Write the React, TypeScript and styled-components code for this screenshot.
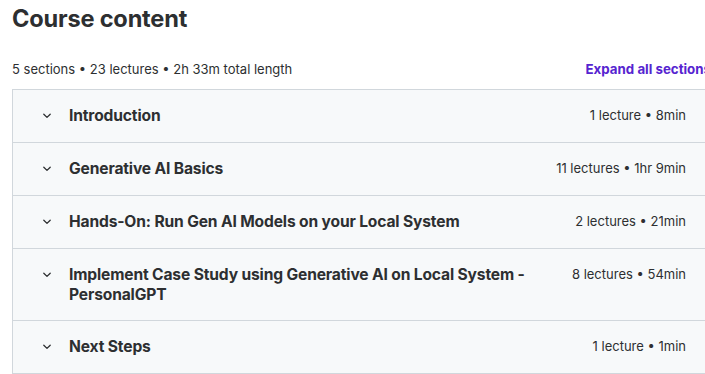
import * as React from 'react';
import styled, {createGlobalStyle} from 'styled-components';

const GlobalStyle = createGlobalStyle`
    html, body {
        margin: 0;
        padding: 0;
        background: #ffffff;
        overflow: hidden;
    }
    body {
        font-family: Inter, "Liberation Sans", Arial, sans-serif;
        color: #2d2f31;
    }
`

const Page = styled.div`
    width: 699px;
    padding: 4px 0 0 12px;
`
const Heading = styled.h2`
    font-size: 23.6px;
    line-height: 29px;
    font-weight: 700;
    margin: 0 0 26px 0;
    letter-spacing: -0.2px;
`
const SummaryBar = styled.div`
    display: flex;
    justify-content: space-between;
    align-items: center;
    height: 20px;
    margin-bottom: 10px;
    font-size: 13px;
`
const Stats = styled.span`
    color: #2d2f31;
`
const ExpandLink = styled.button`
    border: none;
    background: none;
    padding: 0;
    font: inherit;
    font-size: 13.3px;
    font-weight: 700;
    color: #5624d0;
    cursor: pointer;
    white-space: nowrap;
`
const Accordion = styled.div`
    border: 1px solid #d1d7dc;
    border-bottom: none;
`
const SectionRow = styled.div`
    display: flex;
    align-items: flex-start;
    padding: 16px 24px 16px 29px;
    background: #f7f9fa;
    border-bottom: 1px solid #d1d7dc;
    cursor: pointer;
`
const Chevron = styled.span`
    display: flex;
    align-items: center;
    height: 20px;
    width: 27px;
    flex-shrink: 0;
    color: #2d2f31;
`
const SectionTitle = styled.div`
    flex: 1;
    font-size: 15.6px;
    line-height: 19.5px;
    font-weight: 700;
    max-width: 490px;
    letter-spacing: -0.15px;
`
const SectionMeta = styled.div`
    margin-left: auto;
    font-size: 13px;
    line-height: 19.5px;
    white-space: nowrap;
    padding-left: 24px;
`

const sections = [
    {title: 'Introduction', meta: '1 lecture • 8min'},
    {title: 'Generative AI Basics', meta: '11 lectures • 1hr 9min'},
    {title: 'Hands-On: Run Gen AI Models on your Local System', meta: '2 lectures • 21min'},
    {title: 'Implement Case Study using Generative AI on Local System - PersonalGPT', meta: '8 lectures • 54min'},
    {title: 'Next Steps', meta: '1 lecture • 1min'},
];

const ChevronIcon = () => (
    <svg width="10" height="6" viewBox="0 0 10 6" fill="none">
        <path d="M1.8 1.3 L5 4.4 L8.2 1.3" stroke="currentColor" strokeWidth="1.3" strokeLinecap="round" strokeLinejoin="round"/>
    </svg>
);

export default function App(){
    return(
        <>
            <GlobalStyle/>
            <Page>
                <Heading>Course content</Heading>
                <SummaryBar>
                    <Stats>5 sections • 23 lectures • 2h 33m total length</Stats>
                    <ExpandLink>Expand all sections</ExpandLink>
                </SummaryBar>
                <Accordion>
                    {sections.map((s) => (
                        <SectionRow key={s.title}>
                            <Chevron><ChevronIcon/></Chevron>
                            <SectionTitle>{s.title}</SectionTitle>
                            <SectionMeta>{s.meta}</SectionMeta>
                        </SectionRow>
                    ))}
                </Accordion>
            </Page>
        </>
    )
}
